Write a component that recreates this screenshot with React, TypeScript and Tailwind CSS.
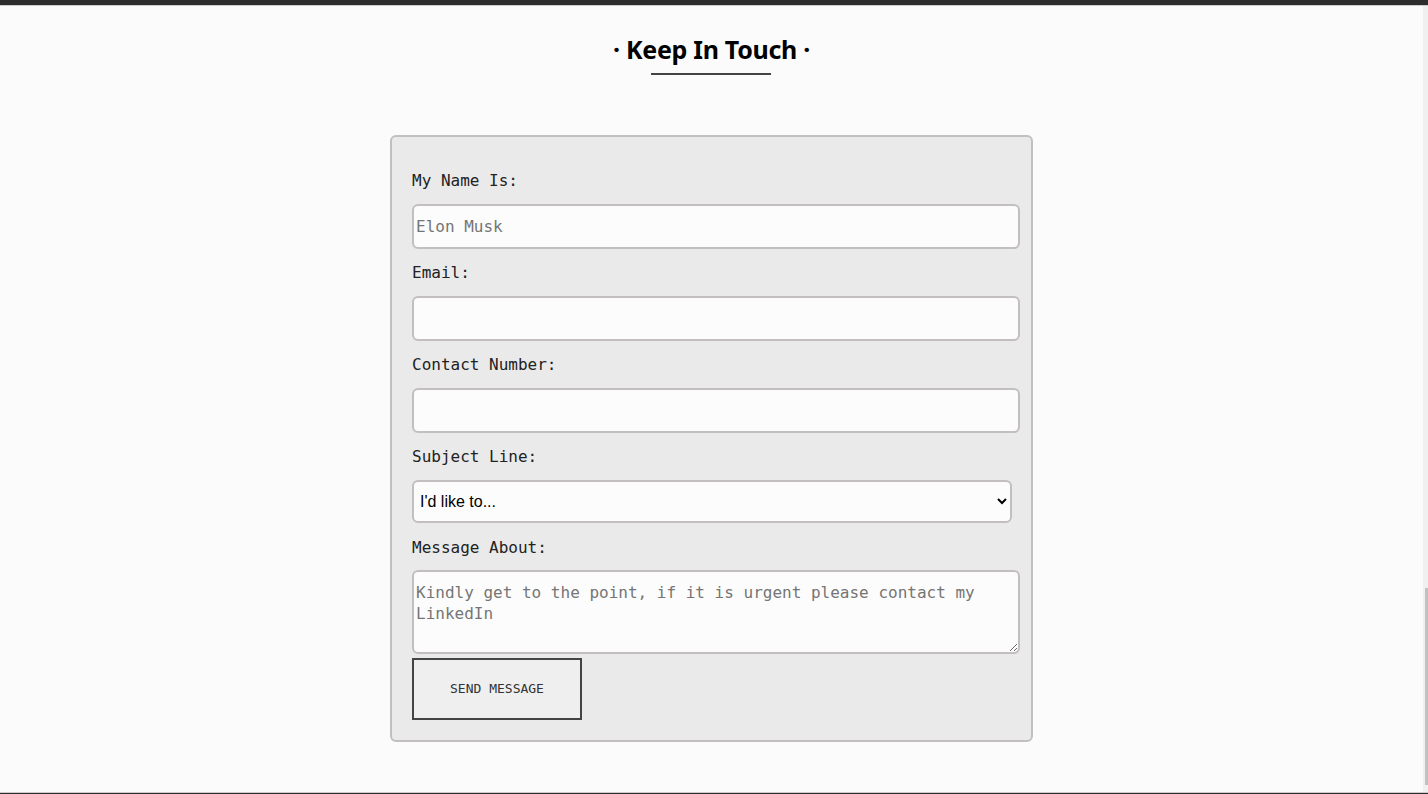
const mono = 'font-["DejaVu_Sans_Mono","Liberation_Mono",monospace]'

function Field({ label, children }: { label: string; children: React.ReactNode }) {
  return (
    <div className="flex flex-col">
      <label className={`${mono} text-[16px] leading-6 text-[#222] mb-[11px]`}>{label}</label>
      {children}
    </div>
  )
}

const inputCls = `${mono} h-[45px] w-full rounded-md border-2 border-[#c4bfbf] bg-[#fcfcfc] px-[2px] text-[16px] text-[#333] placeholder:text-[#757575] outline-none`

export default function App() {
  return (
    <div className="flex h-[794px] w-[1428px] flex-col overflow-hidden bg-[#fbfbfb]">
      <div className="h-[5px] shrink-0 bg-[#2d2d2d]" />
      <div className="h-px shrink-0 bg-[#cfcacb]" />
      <div className="flex min-h-0 flex-1">
        <main className="flex flex-1 flex-col items-center">
          <div className="mt-[27px] flex flex-col items-center">
            <h2 className='font-["Noto_Sans","Open_Sans",sans-serif] text-[25px] font-bold leading-8 tracking-[-0.3px] text-black'>
              · Keep In Touch ·
            </h2>
            <div className="mt-[8px] h-[2px] w-[120px] bg-[#444]" />
          </div>

          <form
            onSubmit={(e) => e.preventDefault()}
            className="mt-[60px] flex w-[643px] flex-col rounded-md border-2 border-[#c4bfbf] bg-[#eaeaea] pt-[32px] pb-[20px] pl-[20px] pr-[11px]"
          >
            <div className="flex flex-col gap-[12px]">
              <Field label="My Name Is:">
                <input className={inputCls} placeholder="Elon Musk" />
              </Field>
              <Field label="Email:">
                <input className={inputCls} />
              </Field>
              <Field label="Contact Number:">
                <input className={inputCls} />
              </Field>
              <Field label="Subject Line:">
                <select className='h-[43px] w-[600px] rounded-md border-2 border-[#c4bfbf] bg-[#fcfcfc] px-[2px] font-["Liberation_Sans",Arial,sans-serif] text-[16px] text-black outline-none'>
                  <option>I'd like to...</option>
                </select>
              </Field>
            </div>
            <div className="mt-[13px] flex flex-col">
              <label className={`${mono} text-[16px] leading-6 text-[#222] mb-[10px]`}>Message About:</label>
              <textarea
                className={`${mono} h-[84px] w-full resize-y rounded-md border-2 border-[#c4bfbf] bg-[#fcfcfc] px-[2px] pt-[10px] text-[16px] leading-[21px] text-[#333] placeholder:text-[#757575] outline-none`}
                placeholder="Kindly get to the point, if it is urgent please contact my LinkedIn"
              />
            </div>
            <button
              type="submit"
              className={`${mono} mt-[4px] h-[62px] w-[170px] border-2 border-[#444] bg-[#efefef] text-[13px] text-[#333]`}
            >
              SEND MESSAGE
            </button>
          </form>
        </main>
        <div className="flex w-[5px] shrink-0 flex-col bg-[#f0f0f0] pt-[582px] pb-[7px] pl-[2px]">
          <div className="flex-1 bg-[#c1c1c1]" />
        </div>
      </div>
      <div className="h-px shrink-0 bg-[#cfcacb]" />
      <div className="h-px shrink-0 bg-[#2d2d2d]" />
    </div>
  )
}
